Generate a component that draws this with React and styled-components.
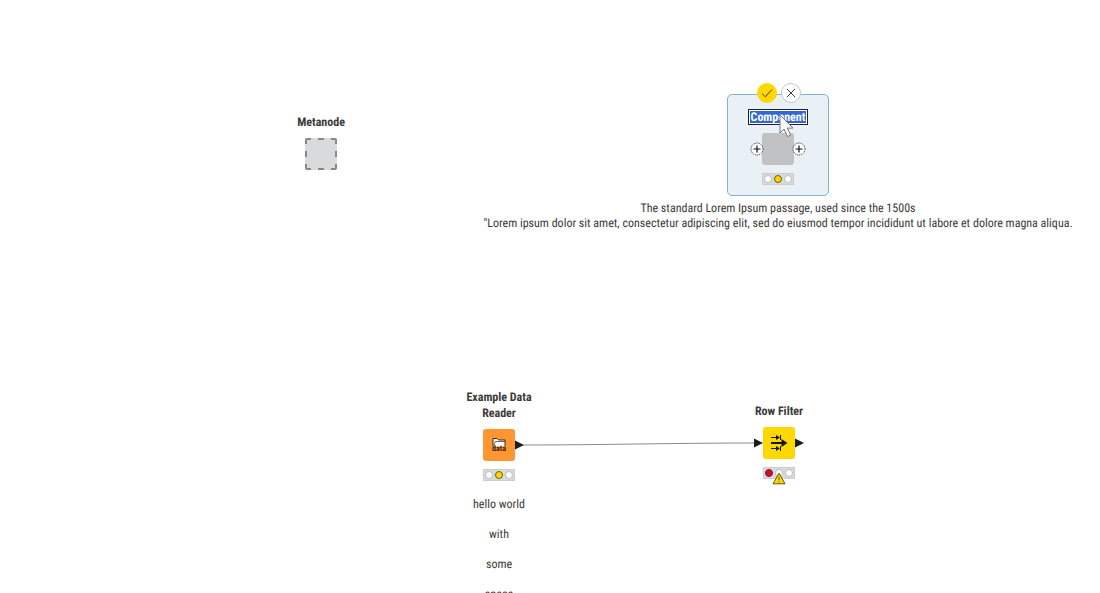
import React from "react";
import styled, { createGlobalStyle, css } from "styled-components";

const GlobalStyle = createGlobalStyle`
  * { box-sizing: border-box; }
  body {
    margin: 0;
    background: #ffffff;
    color: #3e3a39;
    font-family: "Roboto Condensed", Roboto, sans-serif;
    text-rendering: geometricPrecision;
  }
`;

const Canvas = styled.main`
  position: relative;
  height: 100vh;
  overflow: hidden;
`;

const Connector = styled.svg`
  position: absolute;
  left: 520px;
  top: 436px;
  overflow: visible;
`;

const Node = styled.section`
  position: absolute;
  left: ${(p) => p.$x}px;
  top: ${(p) => p.$y}px;
  display: flex;
  flex-direction: column;
  align-items: center;
  gap: 8px;
  width: ${(p) => p.$width || 96}px;
  margin-left: ${(p) => (p.$width || 96) / -2}px;
`;

const nameText = css`
  font-family: inherit;
  font-size: 12px;
  line-height: 16px;
  font-weight: 700;
  text-align: center;
`;

const NodeName = styled.h2`
  ${nameText}
  margin: 0;
  white-space: pre;
`;

const NameInput = styled.input`
  ${nameText}
  width: 60px;
  height: 16px;
  padding: 1px;
  border: 1px solid #222222;
  border-radius: 0;
  outline: none;
  line-height: 12px;
  color: #ffffff;
  background: #3367d1 content-box;
  box-shadow: inset 0 0 0 1px #ffffff;
  text-rendering: inherit;
`;

const Torso = styled.div`
  position: relative;
  width: 32px;
  height: 32px;
  border-radius: 3px;
  background: ${(p) => p.$color};
  svg { display: block; overflow: visible; }
`;

const Port = styled.svg`
  position: absolute;
  top: ${(p) => p.$top}px;
  left: ${(p) => p.$left}px;
`;

const Status = styled.div`
  position: relative;
  display: flex;
  align-items: center;
  justify-content: center;
  gap: 2px;
  width: 32px;
  height: 12px;
  background: #d8d9d9;
  border: 1px solid #cccdcd;
`;

const Light = styled.span`
  width: 8px;
  height: 8px;
  border-radius: 50%;
  background: ${(p) => p.$fill || "#ffffff"};
  border: 1px solid ${(p) => p.$edge || "#bdbdbd"};
`;

const Warning = styled.svg`
  position: absolute;
  left: 8px;
  top: 4px;
`;

const Comment = styled.p`
  margin: 8px 0 0;
  font-size: 12px;
  line-height: 15px;
  text-align: center;
  white-space: pre;
`;

const Selection = styled.div`
  position: absolute;
  left: 727px;
  top: 94px;
  width: 102px;
  height: 102px;
  border: 1px solid #84b1cf;
  border-radius: 5px;
  background: #e9f0f6;
`;

const Actions = styled.div`
  position: absolute;
  left: 757px;
  top: 83px;
  display: flex;
  gap: 4px;
`;

const RoundButton = styled.button`
  display: grid;
  place-items: center;
  width: 20px;
  height: 20px;
  padding: 0;
  border: 1px solid ${(p) => (p.$primary ? "#ffd800" : "#c4c6c8")};
  border-radius: 50%;
  background: ${(p) => (p.$primary ? "#ffd800" : "#ffffff")};
`;

const Pointer = styled.svg`
  position: absolute;
  left: 779px;
  top: 114px;
`;

function StatusBar({ first, middle, warning }) {
  return (
    <Status>
      <Light $fill={first} $edge={first && "#8f1622"} />
      <Light $fill={middle} $edge={middle && "#6b5d10"} />
      <Light />
      {warning && (
        <Warning width="14" height="13" viewBox="0 0 14 13" aria-label="Warning">
          <path d="M7 1.200 13 11.800H1Z" fill="#ffd800" stroke="#5c5420" strokeLinejoin="round" />
          <path d="M7 4.600v3.600M7 9.200v1.200" stroke="#6b5d10" />
        </Warning>
      )}
    </Status>
  );
}

function FlowPort({ left, top = 11 }) {
  return (
    <Port $left={left} $top={top} width="9" height="10" viewBox="0 0 9 10">
      <path d="M0 .5 9 5 0 9.500Z" fill="#1c1c1c" />
    </Port>
  );
}

function AddPort({ left }) {
  return (
    <Port $left={left} $top={9} width="14" height="14" viewBox="0 0 14 14">
      <circle cx="7" cy="7" r="6" fill="#fff" stroke="#222" strokeDasharray="1 1" />
      <path d="M7 3.500v7M3.500 7h7" stroke="#111" strokeWidth="1.200" />
    </Port>
  );
}

export default function App() {
  return (
    <>
      <GlobalStyle />
      <Canvas>
        <Connector width="236" height="14" viewBox="0 0 236 14">
          <path d="M3 9C80 9 155 7 235 7" fill="none" stroke="#8b8b8b" />
        </Connector>

        <Node $x={321} $y={114}>
          <NodeName>Metanode</NodeName>
          <Torso $color="#d9dadb">
            <svg width="32" height="32" viewBox="0 0 32 32">
              <path
                d="M1 6V2q0-1 1-1h4M26 1h4q1 0 1 1v4M31 26v4q0 1-1 1h-4M6 31H2q-1 0-1-1v-4M13 1h6M13 31h6M1 13v6M31 13v6"
                fill="none"
                stroke="#888888"
                strokeWidth="2"
              />
            </svg>
          </Torso>
        </Node>

        <Selection />
        <Node $x={778} $y={109} $width={640}>
          <NameInput aria-label="Component name" defaultValue="Component" />
          <Torso $color="#c0c2c4">
            <AddPort left={-12} />
            <AddPort left={30} />
          </Torso>
          <StatusBar middle="#ffd800" />
          <Comment>{`The standard Lorem Ipsum passage, used since the 1500s
"Lorem ipsum dolor sit amet, consectetur adipiscing elit, sed do eiusmod tempor incididunt ut labore et dolore magna aliqua.`}</Comment>
        </Node>
        <Actions>
          <RoundButton $primary aria-label="Confirm">
            <svg width="12" height="12" viewBox="0 0 12 12" fill="none" stroke="#3e3a39">
              <path d="M1 6.500 4.300 9.800 11 2.500" />
            </svg>
          </RoundButton>
          <RoundButton aria-label="Cancel">
            <svg width="12" height="12" viewBox="0 0 12 12" fill="none" stroke="#3e3a39">
              <path d="M2 2 10 10M10 2 2 10" />
            </svg>
          </RoundButton>
        </Actions>

        <Node $x={499} $y={389}>
          <NodeName>{"Example Data\nReader"}</NodeName>
          <Torso $color="#ff9632">
            <svg width="32" height="32" viewBox="0 0 32 32">
              <path d="M10 17.500V9.500h4l1.500 1.500H22v6.500" fill="#fff" stroke="#3a2a1c" />
              <path d="M10.500 17l2-4.500H22" fill="none" stroke="#3a2a1c" strokeWidth=".7" />
              <text x="16" y="22" textAnchor="middle" fontSize="8" fontWeight="700" fill="#3a2a1c">data</text>
            </svg>
            <FlowPort left={32} />
          </Torso>
          <StatusBar middle="#ffd800" />
          <Comment>{"hello world\n\nwith\n\nsome\n\nspace"}</Comment>
        </Node>

        <Node $x={779} $y={403}>
          <NodeName>Row Filter</NodeName>
          <Torso $color="#ffd800">
            <svg width="32" height="32" viewBox="0 0 32 32">
              <path d="M8 16h12" stroke="#161616" strokeWidth="2" />
              <path d="M18.500 12 24.500 16 18.500 20Z" fill="#161616" />
              <path d="M8 10.500h6M17.500 8v5M8 21.500h6M17.500 19v5" stroke="#161616" />
              <path d="M13 8l4 2.500-4 2.500ZM13 19l4 2.500-4 2.500Z" fill="#161616" />
            </svg>
            <FlowPort left={-9} />
            <FlowPort left={32} />
          </Torso>
          <StatusBar first="#c4122f" warning />
        </Node>

        <Pointer width="16" height="24" viewBox="0 0 16 24">
          <path d="M1 1v18l4-4 3.500 7.500 3.200-1.400-3.300-7H14Z" fill="#f8fafc" stroke="#777" strokeLinejoin="round" />
        </Pointer>
      </Canvas>
    </>
  );
}
